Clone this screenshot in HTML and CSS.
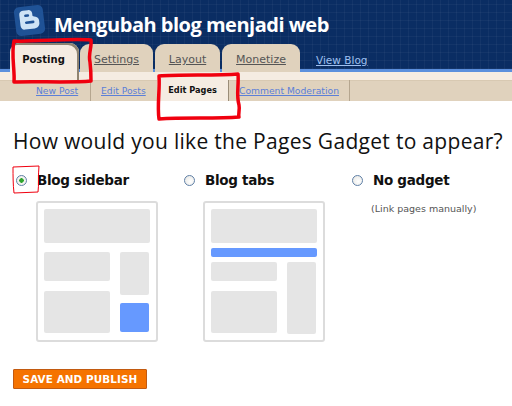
FILE: index.html
```html
<!DOCTYPE html>
<html lang="en">
<head>
    <meta charset="UTF-8">
    <title>Mengubah blog menjadi web</title>
    <link rel="stylesheet" href="styles.css">
</head>
<body>
    <header class="masthead">
        <div class="brand">
            <svg class="logo" width="33" height="33" viewBox="0 0 33 33">
                <g transform="rotate(-7 16.500 16.500)">
                    <rect x="2" y="2" width="29" height="29" rx="5" fill="#1f5296"/>
                    <path fill-rule="evenodd" fill="#cfe3f5" d="M11 6h5c2.500 0 4 1.500 4 4v2c0 1 1 1 3 1.500c2 .5 3 2 3 4v2.500c0 3-2.500 5-5 5H11c-2.500 0-4-2-4-4.500V10c0-2.500 1.500-4 4-4zM13 10a1.300 1.300 0 0 0 0 2.600h2.500a1.300 1.300 0 0 0 0-2.600zM13 17a1.300 1.300 0 0 0 0 2.600h7a1.300 1.300 0 0 0 0-2.600z"/>
                </g>
            </svg>
            <h1>Mengubah blog menjadi web</h1>
        </div>
        <nav class="tabs">
            <a class="tab active">Posting</a>
            <a class="tab tab-settings">Settings</a>
            <a class="tab tab-layout">Layout</a>
            <a class="tab tab-monetize">Monetize</a>
            <a class="view-blog">View Blog</a>
        </nav>
    </header>

    <div class="subnav-top"></div>
    <nav class="subnav">
        <a class="sub-link sub-new">New Post</a>
        <a class="sub-link sub-edit">Edit Posts</a>
        <a class="sub-link current">Edit Pages</a>
        <a class="sub-link sub-mod">Comment Moderation</a>
    </nav>

    <main class="content">
        <h2>How would you like the Pages Gadget to appear?</h2>

        <div class="options">
            <div class="option">
                <label class="choice"><input type="radio" name="gadget" checked> Blog sidebar</label>
                <div class="preview">
                    <div class="block top"></div>
                    <div class="columns">
                        <div class="col-main">
                            <div class="block h29"></div>
                            <div class="block h42"></div>
                        </div>
                        <div class="col-side">
                            <div class="block h43"></div>
                            <div class="block h29 blue"></div>
                        </div>
                    </div>
                </div>
            </div>
            <div class="option">
                <label class="choice"><input type="radio" name="gadget"> Blog tabs</label>
                <div class="preview">
                    <div class="block top"></div>
                    <div class="block tabbar blue"></div>
                    <div class="columns tight">
                        <div class="col-main">
                            <div class="block h19"></div>
                            <div class="block h42"></div>
                        </div>
                        <div class="col-side">
                            <div class="block fill"></div>
                        </div>
                    </div>
                </div>
            </div>
            <div class="option">
                <label class="choice"><input type="radio" name="gadget"> No gadget</label>
                <p class="note">(Link pages manually)</p>
            </div>
        </div>

        <button class="save">SAVE AND PUBLISH</button>
    </main>

    <!-- red marker scribbles on top of the screenshot -->
    <svg class="scribbles" width="512" height="406" viewBox="0 0 512 406">
        <path class="thick" d="M14 41C35 42 70 38 91 40C92 47 88 54 90 62C91 70 91 76 91 81C70 83 35 81 14 82C15 70 11 55 14 41Z"/>
        <path class="thick" d="M159 76C180 74 215 76 238 74C239 85 236 95 239 105C240 110 238 114 239 117C215 119 185 117 159 119C157 105 160 90 159 76Z"/>
        <path class="thin" d="M13 167L39 166C38 175 39 185 38 192L14 193C13 185 13 175 13 167Z"/>
    </svg>
</body>
</html>
```

FILE: styles.css
```css
* {
    box-sizing: border-box;
}

body {
    margin: 0;
    width: 512px;
    height: 406px;
    position: relative;
    overflow: hidden;
    background: #fff;
    color: #111;
    font-family: "DejaVu Sans", sans-serif;
}

/* Header */
.masthead {
    height: 72px;
    background-color: #0a2d63;
    background-image:
        repeating-linear-gradient(90deg, rgba(255, 255, 255, 0.04) 0 1px, transparent 1px 8px),
        repeating-linear-gradient(0deg, rgba(255, 255, 255, 0.04) 0 1px, transparent 1px 8px);
    border-bottom: 3px solid #5b8fdd;
    display: flex;
    flex-direction: column;
}

.brand {
    height: 43px;
    padding: 4px 0 0 13px;
    display: flex;
    align-items: flex-start;
    gap: 8px;
}

.logo {
    flex: none;
}

h1 {
    margin: 3px 0 0;
    color: #fff;
    font-family: "Open Sans", sans-serif;
    font-size: 20px;
    line-height: 36px;
    font-weight: 700;
    white-space: nowrap;
    letter-spacing: -0.5px;
    height: 36px;
}

.tabs {
    display: flex;
    align-items: flex-end;
    height: 26px;
    padding-left: 10px;
}

.tab {
    width: 66px;
    height: 28px;
    margin: 0 2px -3px 0;
    background: #e0d2bd;
    border-radius: 9px 9px 0 0;
    color: #555;
    font-size: 11px;
    line-height: 32px;
    text-align: center;
    text-decoration: underline;
}

.tab.active {
    width: 69px;
    height: 37px;
    margin: 0 1px -11px 0;
    padding-right: 2px;
    position: relative;
    background: #f5ece2;
    color: #111;
    font-weight: 700;
    font-size: 10px;
    line-height: 34px;
    text-decoration: none;
    box-shadow: inset -2px 2px 0 #8f8472;
}

.tab-settings { width: 73px; }
.tab-layout { width: 65px; }
.tab-monetize { width: 78px; margin-right: 16px; }

.view-blog {
    height: 22px;
    margin-bottom: -2px;
    color: #9fc0f0;
    font-size: 10.500px;
    line-height: 22px;
    text-decoration: underline;
}

/* Sub navigation */
.subnav-top {
    height: 8px;
    background: #f5ece2;
}

.subnav {
    height: 21px;
    width: 512px;
    background: linear-gradient(#d8c9b2 0 1px, #e0d2bd 1px);
    padding-left: 36px;
    display: flex;
    align-items: stretch;
    font-size: 9.200px;
    line-height: 21px;
}

.sub-link {
    color: #5b7fd8;
    text-decoration: underline;
    white-space: nowrap;
}

.sub-new {
    width: 55px;
    border-right: 1px solid #b5a68f;
}

.sub-edit {
    margin-left: 10px;
    width: 56px;
}

.sub-link.current {
    width: 72px;
    background: #f5ece2;
    border-right: 1px solid #9a8c78;
    color: #111;
    font-weight: 700;
    font-size: 8.200px;
    text-align: center;
    text-decoration: none;
}

.sub-mod {
    margin-left: 10px;
    width: 111px;
    border-right: 1px solid #b5a68f;
}

/* Page body */
.content {
    padding: 0 0 0 13px;
}

h2 {
    margin: 28px 0 0;
    font-family: "Open Sans", sans-serif;
    font-size: 21px;
    line-height: 24px;
    font-weight: 400;
    color: #111;
    white-space: nowrap;
    letter-spacing: 0.3px;
}

.options {
    display: flex;
    margin-top: 17px;
}

.option {
    width: 168px;
    flex: none;
}

.option + .option .preview {
    margin-left: 22px;
}

.choice {
    display: flex;
    align-items: center;
    gap: 10px;
    height: 20px;
    padding-left: 3px;
    font-size: 13.500px;
    font-weight: 700;
    letter-spacing: -0.3px;
}

.choice input {
    appearance: none;
    width: 11px;
    height: 11px;
    margin: 0;
    flex: none;
    border: 1px solid #5f7fa6;
    border-radius: 50%;
    background: radial-gradient(circle at 60% 60%, #fff, #e4e4e0);
}

.choice input:checked {
    background: radial-gradient(circle, #2fa52f 0 2px, #f2f2ee 2.500px);
}

.preview {
    width: 122px;
    height: 141px;
    margin: 11px 0 0 23px;
    padding: 6px;
    border: 2px solid #dcdcdc;
    border-radius: 3px;
    display: flex;
    flex-direction: column;
}

.block {
    background: #e5e5e5;
    border-radius: 2px;
}

.block.blue {
    background: #6699ff;
}

.top {
    height: 34px;
    flex: none;
}

.tabbar {
    height: 9px;
    margin-top: 5px;
    flex: none;
}

.columns {
    display: flex;
    gap: 10px;
    margin-top: 9px;
    flex: 1;
}

.columns.tight {
    margin-top: 5px;
}

.col-main {
    width: 66px;
    display: flex;
    flex-direction: column;
    gap: 10px;
}

.col-side {
    width: 29px;
    display: flex;
    flex-direction: column;
    gap: 8px;
}

.h19 { height: 19px; }
.h29 { height: 29px; }
.h42 { height: 42px; }
.h43 { height: 43px; }
.fill { flex: 1; }

.note {
    margin: 12px 0 0 22px;
    font-size: 9.500px;
    line-height: 14px;
    color: #555;
    white-space: nowrap;
}

.save {
    display: block;
    width: 134px;
    height: 20px;
    margin-top: 27px;
    padding: 0;
    border: 1px solid #c25a10;
    border-radius: 1px;
    background: #f57300;
    color: #fff;
    font-family: "DejaVu Sans", sans-serif;
    font-size: 10.400px;
    font-weight: 700;
    letter-spacing: 0.1px;
}

/* Red marker */
.scribbles {
    position: absolute;
    top: 0;
    left: 0;
    pointer-events: none;
}

.scribbles path {
    fill: none;
    stroke: #f0000f;
    stroke-linejoin: round;
}

.thick { stroke-width: 3.500; }
.thin { stroke-width: 1; }
```
